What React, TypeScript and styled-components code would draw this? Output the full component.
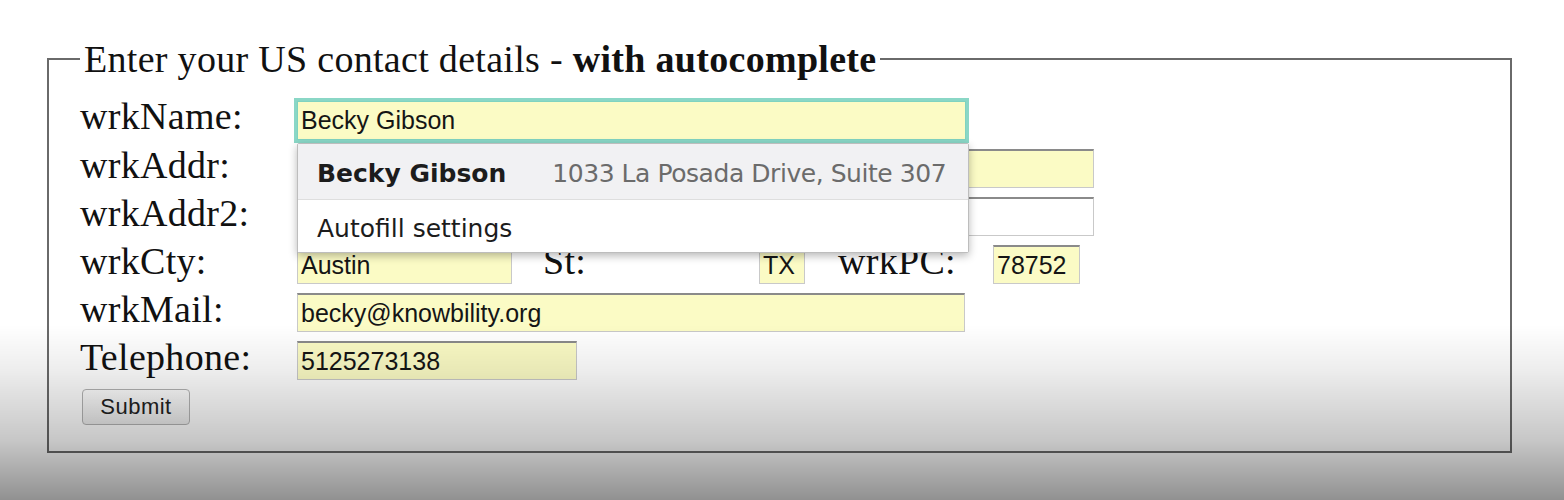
import styled, { createGlobalStyle } from 'styled-components';

const GlobalStyle = createGlobalStyle`
  html, body {
    margin: 0;
    background: #fff;
  }
  body {
    font-family: "Liberation Serif", "Times New Roman", serif;
    color: #111;
  }
`

const Page = styled.div`
  box-sizing: border-box;
  height: 500px;
  overflow: hidden;
  padding: 37px 52px 0 47px;
`

const Fieldset = styled.fieldset`
  margin: 0;
  min-width: 0;
  border: 2px solid #6a6a6a;
  padding: 20px 0 26px 31px;
`

const Legend = styled.legend`
  padding: 0 4px;
  font-size: 38px;
  line-height: 44px;
  letter-spacing: 0.3px;
  color: #111;
  b {
    font-weight: bold;
  }
`

const Form = styled.div`
  display: flex;
  flex-direction: column;
  gap: 9px;
`

const Row = styled.div`
  display: flex;
  align-items: baseline;
`

const Label = styled.label<{ $w?: number; $ml?: number }>`
  flex: none;
  width: ${p => p.$w ?? 217}px;
  margin-left: ${p => p.$ml ?? 0}px;
  font-size: 38px;
  line-height: 31px;
  letter-spacing: 0.3px;
  white-space: nowrap;
`

const Field = styled.input<{ $w: number; $filled?: boolean; $focus?: boolean }>`
  flex: none;
  box-sizing: border-box;
  width: ${p => p.$w}px;
  height: 39px;
  margin: 0;
  padding: 0 4px 0 3px;
  font: 25px "Liberation Sans", Arial, sans-serif;
  color: #151515;
  background: ${p => (p.$filled ? '#fbfbc5' : '#fff')};
  border: 1px solid #c9c9c9;
  border-top: 2px solid #8a8a8a;
  outline: none;
  ${p => p.$focus && `
    border: 1px solid #7fd3c0;
    box-shadow: 0 0 0 3px #8ad7c6;
  `}
`

const Anchor = styled.div`
  position: relative;
  display: flex;
  flex: none;
`

const Dropdown = styled.div`
  position: absolute;
  top: calc(100% + 3px);
  left: 0;
  width: 672px;
  box-sizing: border-box;
  background: #fff;
  border: 1px solid #bdbdbd;
  border-radius: 2px;
  box-shadow: 0 3px 8px rgba(0, 0, 0, 0.28);
  font-family: "DejaVu Sans", "Liberation Sans", sans-serif;
  font-size: 25px;
  z-index: 2;
`

const Suggestion = styled.div<{ $active?: boolean; $h: number }>`
  display: flex;
  align-items: center;
  height: ${p => p.$h}px;
  padding-left: 19px;
  padding-top: 4px;
  box-sizing: border-box;
  background: ${p => (p.$active ? '#f1f1f3' : '#fff')};
  border-bottom: ${p => (p.$active ? '1px solid #dedede' : 'none')};
  color: #1c1c1c;
  white-space: nowrap;
`

const Name = styled.span`
  font-weight: bold;
`

const Address = styled.span`
  margin-left: 46px;
  color: #6b6b6b;
  letter-spacing: -0.45px;
`

const SubmitButton = styled.button`
  flex: none;
  width: 108px;
  height: 36px;
  margin-left: 2px;
  padding: 0;
  font: 22px "Liberation Sans", Arial, sans-serif;
  letter-spacing: 0.5px;
  color: #222;
  background: linear-gradient(#ffffff, #ececec);
  border: 1px solid #b4b4b4;
  border-radius: 4px;
`

const Shade = styled.div`
  position: fixed;
  inset: 0;
  pointer-events: none;
  z-index: 5;
  background: linear-gradient(
    to bottom,
    rgba(0, 0, 0, 0) 0,
    rgba(0, 0, 0, 0) 325px,
    rgba(0, 0, 0, 0.07) 370px,
    rgba(0, 0, 0, 0.22) 440px,
    rgba(0, 0, 0, 0.43) 500px
  );
`

const App = (): JSX.Element => {
  return (
    <>
      <GlobalStyle />
      <Page>
        <Fieldset>
          <Legend>
            Enter your US contact details - <b>with autocomplete</b>
          </Legend>
          <Form>
            <Row>
              <Label>wrkName:</Label>
              <Anchor>
                <Field $w={669} $filled $focus value="Becky Gibson" readOnly />
                <Dropdown>
                  <Suggestion $active $h={56}>
                    <Name>Becky Gibson</Name>
                    <Address>1033 La Posada Drive, Suite 307</Address>
                  </Suggestion>
                  <Suggestion $h={52}>Autofill settings</Suggestion>
                </Dropdown>
              </Anchor>
            </Row>
            <Row>
              <Label>wrkAddr:</Label>
              <Field $w={797} $filled value="" readOnly />
            </Row>
            <Row>
              <Label>wrkAddr2:</Label>
              <Field $w={797} value="" readOnly />
            </Row>
            <Row>
              <Label>wrkCty:</Label>
              <Field $w={215} $filled value="Austin" readOnly />
              <Label $ml={31} $w={216}>St:</Label>
              <Field $w={46} $filled value="TX" readOnly />
              <Label $ml={33} $w={155}>wrkPC:</Label>
              <Field $w={87} $filled value="78752" readOnly />
            </Row>
            <Row>
              <Label>wrkMail:</Label>
              <Field $w={668} $filled value="becky@knowbility.org" readOnly />
            </Row>
            <Row>
              <Label>Telephone:</Label>
              <Field $w={280} $filled value="5125273138" readOnly />
            </Row>
            <Row>
              <SubmitButton>Submit</SubmitButton>
            </Row>
          </Form>
        </Fieldset>
      </Page>
      <Shade />
    </>
  )
}

export default App
